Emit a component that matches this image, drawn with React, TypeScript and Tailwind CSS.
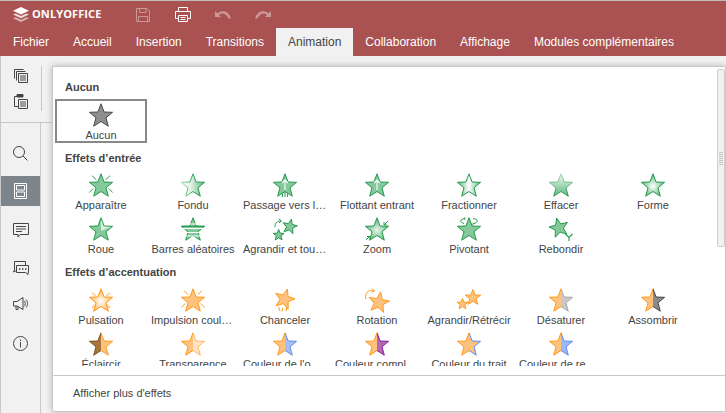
import type { ReactNode } from 'react';

const STAR = 'M12 0.8L15.1 9L23.6 9.300L17 14.800L19.300 23.200L12 18.500L4.700 23.200L7 14.800L0.400 9.300L8.900 9Z';

const GREEN = '#239a4b';
const GREEN_FILL = '#84c89b';
const ORANGE = '#ff9a1f';
const ORANGE_FILL = '#ffc27c';

function Icon({ children, defs }: { children: ReactNode; defs?: ReactNode }) {
  return (
    <svg width="24" height="24" viewBox="0 0 24 24" className="overflow-visible shrink-0">
      {defs && <defs>{defs}</defs>}
      {children}
    </svg>
  );
}

function Star({ fill, stroke }: { fill: string; stroke: string }) {
  return <path d={STAR} fill={fill} stroke={stroke} strokeWidth="1" vectorEffect="non-scaling-stroke" />;
}

// star split down the middle, as the emphasis effects draw it
function HalfStar({ id, left, leftStroke, right, rightStroke }: { id: string; left: string; leftStroke: string; right: string; rightStroke: string }) {
  return (
    <Icon
      defs={
        <>
          <clipPath id={`${id}-l`}><rect x="-1" y="-1" width="13" height="26" /></clipPath>
          <clipPath id={`${id}-r`}><rect x="12" y="-1" width="13" height="26" /></clipPath>
        </>
      }
    >
      <g clipPath={`url(#${id}-l)`}><Star fill={left} stroke={leftStroke} /></g>
      <g clipPath={`url(#${id}-r)`}><Star fill={right} stroke={rightStroke} /></g>
    </Icon>
  );
}

function Linear({ id, stops, vertical }: { id: string; stops: [string, string][]; vertical?: boolean }) {
  return (
    <linearGradient id={id} x1="0" y1="0" x2={vertical ? '0' : '1'} y2={vertical ? '1' : '0'}>
      {stops.map(([o, c]) => <stop key={o} offset={o} stopColor={c} />)}
    </linearGradient>
  );
}

function Radial({ id, inner, outer }: { id: string; inner: string; outer: string }) {
  return (
    <radialGradient id={id} cx="0.5" cy="0.55" r="0.5">
      <stop offset="0" stopColor={inner} />
      <stop offset="1" stopColor={outer} />
    </radialGradient>
  );
}

function Rays({ color }: { color: string }) {
  return (
    <path d="M3 2.700L7.300 6.700M21 2.700L16.700 6.700M0.300 19.500L4.300 15.500M23.700 19.500L19.700 15.500" stroke={color} strokeWidth="1" fill="none" />
  );
}

const noneIcon = (
  <Icon><Star fill="#8e8e8e" stroke="#4a4a4a" /></Icon>
);

const entryEffects: { label: string; icon: ReactNode }[] = [
  {
    label: 'Apparaître',
    icon: (
      <Icon>
        <Rays color={GREEN} />
        <Star fill={GREEN_FILL} stroke={GREEN} />
      </Icon>
    ),
  },
  {
    label: 'Fondu',
    icon: (
      <Icon defs={<><Linear id="fade" stops={[['0', '#ffffff'], ['0.4', '#e2f2e7'], ['1', '#5fb57c']]} /><Linear id="fadeS" stops={[['0', '#a5d8b6'], ['0.6', GREEN], ['1', GREEN]]} /></>}>
        <Star fill="url(#fade)" stroke="url(#fadeS)" />
      </Icon>
    ),
  },
  {
    label: 'Passage vers le bas',
    icon: (
      <Icon>
        <Star fill={GREEN_FILL} stroke={GREEN} />
        <path d="M12 17V7M9 10l3-3l3 3" stroke="#ffffff" strokeWidth="1.100" fill="none" />
        <path d="M9.500 20.500v3.500M12 19v5M14.500 20.500v3.500" stroke={GREEN} strokeWidth="1" />
      </Icon>
    ),
  },
  {
    label: 'Flottant entrant',
    icon: (
      <Icon>
        <Star fill={GREEN_FILL} stroke={GREEN} />
        <path d="M12 17V7M9 10l3-3l3 3" stroke="#ffffff" strokeWidth="1.100" fill="none" />
      </Icon>
    ),
  },
  {
    label: 'Fractionner',
    icon: (
      <Icon defs={<Linear id="split" stops={[['0', '#5fb57c'], ['0.5', '#ffffff'], ['1', '#5fb57c']]} />}>
        <Star fill="url(#split)" stroke={GREEN} />
      </Icon>
    ),
  },
  {
    label: 'Effacer',
    icon: (
      <Icon defs={<><Linear id="wipe" vertical stops={[['0', '#f4faf6'], ['1', '#5fb57c']]} /><Linear id="wipeS" vertical stops={[['0', '#a5d8b6'], ['0.5', '#5fb57c'], ['1', GREEN]]} /></>}>
        <Star fill="url(#wipe)" stroke="url(#wipeS)" />
      </Icon>
    ),
  },
  {
    label: 'Forme',
    icon: (
      <Icon defs={<Radial id="shape" inner="#ffffff" outer="#66b982" />}>
        <Star fill="url(#shape)" stroke={GREEN} />
      </Icon>
    ),
  },
  {
    label: 'Roue',
    icon: (
      <Icon>
        <Star fill={GREEN_FILL} stroke={GREEN} />
        <path d="M12 2.200V14L22 9.900L14.700 9.600Z" fill="#d8eedf" />
      </Icon>
    ),
  },
  {
    label: 'Barres aléatoires',
    icon: (
      <Icon>
        <Star fill={GREEN_FILL} stroke={GREEN} />
        <path d="M0 7h24M0 11.500h24M0 15.500h24M0 19h24" stroke="#ffffff" strokeWidth="1.200" />
        <path d="M0.500 9.300H23.500" stroke={GREEN} strokeWidth="1" />
      </Icon>
    ),
  },
  {
    label: 'Agrandir et tourner',
    icon: (
      <Icon>
        <g transform="translate(0 12) scale(0.47)"><Star fill={GREEN_FILL} stroke={GREEN} /></g>
        <g transform="rotate(12 17 9) translate(9.500 1.500) scale(0.62)"><Star fill={GREEN_FILL} stroke={GREEN} /></g>
        <path d="M2 10c0-4 2-6 6-6M6 2l2.500 2l-2.500 2" stroke={GREEN} strokeWidth="1" fill="none" />
      </Icon>
    ),
  },
  {
    label: 'Zoom',
    icon: (
      <Icon defs={<Radial id="zoom" inner="#e6f4ea" outer="#66b982" />}>
        <Star fill="url(#zoom)" stroke={GREEN} />
        <path d="M23 4l-4 4M19 5v3h3M1 23l4-4M2 19.500h3v3" stroke={GREEN} strokeWidth="1" fill="none" />
      </Icon>
    ),
  },
  {
    label: 'Pivotant',
    icon: (
      <Icon>
        <Star fill={GREEN_FILL} stroke={GREEN} />
        <path d="M8 1.500C3 2 2 5 7 6.500M16 1.500C21 2 22 5 17 6.500M8.500 0.500l-1.500 1l1.500 1.500M15.500 6l1.500 0.500l-1.500 1.500" stroke={GREEN} strokeWidth="1" fill="none" />
      </Icon>
    ),
  },
  {
    label: 'Rebondir',
    icon: (
      <Icon>
        <g transform="rotate(-14 10 10) scale(0.82)"><Star fill={GREEN_FILL} stroke={GREEN} /></g>
        <path d="M16.500 17l3.500 3.500l3.500-3.500M20 20.500v3.500" stroke={GREEN} strokeWidth="1.100" fill="none" />
      </Icon>
    ),
  },
];

const emphasisEffects: { label: string; icon: ReactNode }[] = [
  {
    label: 'Pulsation',
    icon: (
      <Icon defs={<Radial id="pulse" inner="#ffffff" outer="#ffb45c" />}>
        <path d="M3 5l4 3M21 5l-4 3M3 20l3-3M21 20l-3-3" stroke="#ffd09a" strokeWidth="2" />
        <Star fill="url(#pulse)" stroke={ORANGE} />
      </Icon>
    ),
  },
  {
    label: 'Impulsion couleur',
    icon: (
      <Icon>
        <Rays color={ORANGE} />
        <Star fill={ORANGE_FILL} stroke={ORANGE} />
      </Icon>
    ),
  },
  {
    label: 'Chanceler',
    icon: (
      <Icon>
        <g transform="rotate(16 12 10) translate(1.500 0) scale(0.86)"><Star fill={ORANGE_FILL} stroke={ORANGE} /></g>
        <path d="M5.500 19l1.500 4M9.500 20l-0.500 3.500M14 20l-1 3" stroke={ORANGE} strokeWidth="1" fill="none" />
      </Icon>
    ),
  },
  {
    label: 'Rotation',
    icon: (
      <Icon>
        <g transform="rotate(10 14 13) translate(3.500 3) scale(0.88)"><Star fill={ORANGE_FILL} stroke={ORANGE} /></g>
        <path d="M1 11C-1 5 4 1 9 3M7 0.500l2.500 2.500l-3 1.500" stroke={ORANGE} strokeWidth="1" fill="none" />
      </Icon>
    ),
  },
  {
    label: 'Agrandir/Rétrécir',
    icon: (
      <Icon>
        <g transform="translate(0 10) scale(0.46)"><Star fill={ORANGE_FILL} stroke={ORANGE} /></g>
        <g transform="translate(8 1) scale(0.66)"><Star fill={ORANGE_FILL} stroke={ORANGE} /></g>
      </Icon>
    ),
  },
  { label: 'Désaturer', icon: <HalfStar id="desat" left={ORANGE_FILL} leftStroke={ORANGE} right="#c9c9c9" rightStroke="#a8a8a8" /> },
  { label: 'Assombrir', icon: <HalfStar id="dark" left={ORANGE_FILL} leftStroke={ORANGE} right="#8a8a8a" rightStroke="#444444" /> },
  { label: 'Éclaircir', icon: <HalfStar id="light" left="#a97639" leftStroke="#7a5121" right={ORANGE_FILL} rightStroke={ORANGE} /> },
  { label: 'Transparence', icon: <HalfStar id="transp" left={ORANGE_FILL} leftStroke={ORANGE} right="#ffe3c2" rightStroke="#ffb866" /> },
  { label: "Couleur de l'objet", icon: <HalfStar id="obj" left={ORANGE_FILL} leftStroke={ORANGE} right="#a9bff2" rightStroke="#5b8def" /> },
  { label: 'Couleur complémentaire', icon: <HalfStar id="comp" left={ORANGE_FILL} leftStroke={ORANGE} right="#b768b5" rightStroke="#8a1f9a" /> },
  { label: 'Couleur du trait', icon: <HalfStar id="line" left={ORANGE_FILL} leftStroke={ORANGE} right={ORANGE_FILL} rightStroke="#5b8def" /> },
  { label: 'Couleur de remplissage', icon: <HalfStar id="fill" left={ORANGE_FILL} leftStroke={ORANGE} right="#9dbaf7" rightStroke="#5b8def" /> },
];

function EffectCell({ label, icon }: { label: string; icon: ReactNode }) {
  return (
    <div className="h-11 w-[92px] flex flex-col items-center pt-1">
      {icon}
      <div className="w-[84px] mt-px text-center text-[11px] leading-[14px] truncate">{label}</div>
    </div>
  );
}

function Heading({ children }: { children: ReactNode }) {
  return <div className="pl-[10px] text-[11px] leading-[14px] font-bold">{children}</div>;
}

const tabs = ['Fichier', 'Accueil', 'Insertion', 'Transitions', 'Animation', 'Collaboration', 'Affichage', 'Modules complémentaires'];

function TopBar() {
  return (
    <div className="bg-[#aa5252] border-t border-[#bdbdbd] shrink-0">
      <div className="h-[27px] flex items-center text-white">
        <svg width="16" height="15" viewBox="0 0 16 15" className="ml-[13px] -mt-px">
          <path d="M8 0L16 3.800L8 7.500L0 3.800Z" fill="#ffffff" />
          <path d="M2.500 6.500L8 9L13.500 6.500L16 7.500L8 11.200L0 7.500Z" fill="#ffffff" fillOpacity="0.8" />
          <path d="M2.500 10.200L8 12.700L13.500 10.200L16 11.200L8 15L0 11.200Z" fill="#ffffff" fillOpacity="0.55" />
        </svg>
        <span className="ml-[3px] w-[71px] text-[11px] font-bold tracking-[0.1px] font-['Open_Sans',sans-serif]">ONLYOFFICE</span>
        <svg width="14" height="14" viewBox="0 0 14 14" className="ml-[33px] opacity-40" fill="none" stroke="#ffffff">
          <path d="M0.500 0.500H11L13.500 3V13.500H0.500Z" />
          <path d="M3.500 0.500V4.500H10V0.500M2.500 13.500V8.500H11.500V13.500" />
        </svg>
        <svg width="16" height="15" viewBox="0 0 16 15" className="ml-[25px]" fill="none" stroke="#ffffff">
          <path d="M3.500 4.500V0.500H12.500V4.500M3.500 11.500H0.500V4.500H15.500V11.500H12.500" />
          <path d="M3.500 8.500H12.500V14.500H3.500ZM5.500 10.500H10.500M5.500 12.500H10.500" />
        </svg>
        <svg width="16" height="9" viewBox="0 0 16 9" className="ml-[24px] opacity-40" fill="#ffffff">
          <path d="M0 1V7H6L4 5C7 2.500 11 3 13.500 8.500H16C14 1.500 8 -1 2.500 3.200Z" />
        </svg>
        <svg width="16" height="9" viewBox="0 0 16 9" className="ml-[24px] opacity-40" fill="#ffffff">
          <path d="M16 1V7H10L12 5C9 2.500 5 3 2.500 8.500H0C2 1.500 8 -1 13.500 3.200Z" />
        </svg>
      </div>
      <div className="h-7 pl-px flex text-xs">
        {tabs.map((tab) => (
          <div
            key={tab}
            className={`px-3 flex items-center ${tab === 'Animation' ? 'bg-[#f1f1f1] text-[#444444]' : 'text-white'}`}
          >
            {tab}
          </div>
        ))}
      </div>
    </div>
  );
}

function SideIcon({ children, active, className }: { children: ReactNode; active?: boolean; className?: string }) {
  return (
    <div className={`flex items-center justify-center ${active ? 'bg-[#7d858c]' : ''} ${className ?? ''}`}>
      {children}
    </div>
  );
}

function Sidebar() {
  const line = { fill: 'none', stroke: '#444444' };
  return (
    <div className="w-[52px] shrink-0 flex flex-col border-l border-[#c8c8c8]">
      <div className="h-[67px] shrink-0 border-b border-[#c8c8c8] flex">
        <div className="w-10 pt-[13px] flex flex-col items-center gap-[11px]">
          <svg width="14" height="14" viewBox="0 0 14 14" {...line}>
            <path d="M0.500 9.500V0.500H9.500M2.500 11.500V2.500H11.500" />
            <path d="M4.500 4.500H13.500V13.500H4.500ZM6 7H12M6 9H12M6 11H12" />
          </svg>
          <svg width="14" height="15" viewBox="0 0 14 15" {...line}>
            <path d="M4 2.500H0.500V12.500H4" />
            <path d="M3 0.500H9V3H3Z" fill="#444444" />
            <path d="M4.500 5.500H13.500V14.500H4.500ZM6 8H12M6 10H12M6 12H12" />
          </svg>
        </div>
        <div className="w-px h-[45px] mt-[10px] bg-[#c8c8c8]" />
      </div>
      <div className="w-10 flex-1 border-r border-[#c8c8c8] pb-px flex flex-col">
        <SideIcon className="h-[53px] pt-[7px]">
          <svg width="15" height="15" viewBox="0 0 15 15" {...line}>
            <circle cx="6" cy="6" r="5.500" />
            <path d="M10 10L14.500 14.500" />
          </svg>
        </SideIcon>
        <SideIcon active className="h-[30px]">
          <svg width="13" height="16" viewBox="0 0 13 16" fill="none" stroke="#ffffff">
            <path d="M0.500 0.500H12.500V15.500H0.500Z" />
            <path d="M2.500 2.500H10.500V7H2.500ZM2.500 9H10.500V13.500H2.500Z" />
          </svg>
        </SideIcon>
        <SideIcon className="h-11 pt-1">
          <svg width="16" height="15" viewBox="0 0 16 15" {...line}>
            <path d="M0.500 0.500H15.500V11.500H7L5 14V11.500H0.500ZM3 3.500H13M3 6H13M3 8.500H9" />
          </svg>
        </SideIcon>
        <SideIcon className="h-9">
          <svg width="16" height="14" viewBox="0 0 16 14" {...line}>
            <path d="M1.500 9.500V0.500H12.500V4" />
            <path d="M1 9.500L0.500 11L3.500 9.500" />
            <path d="M3.500 4.500H15.500V11.500H15V13.500L12.500 11.500H3.500Z" />
            <path d="M6 8h1.500M9 8h1.500M12 8h1.500" strokeWidth="1.500" />
          </svg>
        </SideIcon>
        <SideIcon className="h-[35px]">
          <svg width="16" height="13" viewBox="0 0 16 13" {...line}>
            <path d="M0.500 4.500H4L10 0.500V12.500L4 9H0.500ZM3 9V12.500H5V9.500" />
            <path d="M11.500 4C12.500 5 12.500 8 11.500 9M13 2.500C15 4.500 15 8.500 13 10.500" />
          </svg>
        </SideIcon>
        <SideIcon className="h-[44px]">
          <svg width="15" height="15" viewBox="0 0 15 15" {...line}>
            <circle cx="7.500" cy="7.500" r="7" />
            <path d="M7.500 6V11.500M7.500 3.500V5" />
          </svg>
        </SideIcon>
      </div>
    </div>
  );
}

export default function App() {
  return (
    <div className="relative w-[726px] h-[413px] overflow-hidden flex flex-col bg-[#f1f1f1] text-[#444444] font-['Liberation_Sans',Arial,sans-serif]">
      <TopBar />
      <div className="flex-1 flex min-h-0">
        <Sidebar />
        <div className="flex-1 mt-[10px] mb-px flex flex-col bg-white border border-[#c8c8c8] rounded-bl-[3px] shadow-[0_0_6px_rgba(0,0,0,0.25)] relative">
          <div className="h-[299px] overflow-hidden pt-[13px] pl-[2px] shrink-0">
            <Heading>Aucun</Heading>
            <div className="mt-[5px] w-[92px] h-11 border-2 border-[#888888] flex flex-col items-center pt-0.5">
              {noneIcon}
              <div className="mt-px text-center text-[11px] leading-[14px]">Aucun</div>
            </div>
            <div className="mt-2"><Heading>Effets d’entrée</Heading></div>
            <div className="mt-1 grid grid-cols-[repeat(7,92px)]">
              {entryEffects.map((e) => <EffectCell key={e.label} {...e} />)}
            </div>
            <div className="mt-2"><Heading>Effets d’accentuation</Heading></div>
            <div className="mt-[5px] grid grid-cols-[repeat(7,92px)]">
              {emphasisEffects.map((e) => <EffectCell key={e.label} {...e} />)}
            </div>
          </div>
          <div className="mt-[9px] flex-1 border-t border-[#c8c8c8] pl-5 pt-[10px] text-[11px] leading-[14px]">
            Afficher plus d'effets
          </div>
          <div className="absolute top-[2px] right-0 w-2 h-[178px] bg-[#f1f1f1] border border-[#cfcfcf] rounded-[2px] flex flex-col items-center justify-center gap-px">
            {[0, 1, 2, 3, 4, 5, 6].map((i) => <div key={i} className="w-1 h-px bg-[#c4c4c4]" />)}
          </div>
        </div>
      </div>
    </div>
  );
}
